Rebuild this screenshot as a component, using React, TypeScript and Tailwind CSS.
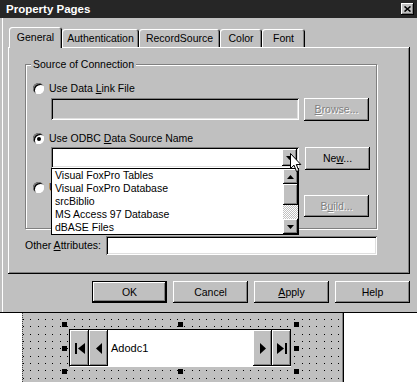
import type { ReactNode } from "react";

const raised = "bg-[#c0c0c0] shadow-[inset_-1px_-1px_#000,inset_1px_1px_#fff,inset_-2px_-2px_#808080]";
const sunken = "shadow-[inset_1px_1px_#808080,inset_-1px_-1px_#fff,inset_2px_2px_#000,inset_-2px_-2px_#dfdfdf]";
const grayed = "text-[#808080] [text-shadow:1px_1px_0_#fff]";

function Radio({ checked = false }: { checked?: boolean }) {
  return (
    <span className="flex h-[11px] w-[11px] shrink-0 items-center justify-center rounded-full bg-white shadow-[inset_1px_1px_#808080,inset_-1px_-1px_#fff,inset_2px_2px_#000]">
      {checked && <span className="h-[4px] w-[4px] rounded-full bg-black" />}
    </span>
  );
}

function RadioRow({ children, checked, className = "" }: { children: ReactNode; checked?: boolean; className?: string }) {
  return (
    <div className={`relative flex h-[13px] items-center gap-[5px] pl-[7px] ${className}`}>
      <Radio checked={checked} />
      <span className="whitespace-nowrap">{children}</span>
    </div>
  );
}

function Button({
  children,
  className = "",
  disabled = false,
  isDefault = false,
}: {
  children: ReactNode;
  className?: string;
  disabled?: boolean;
  isDefault?: boolean;
}) {
  return (
    <div
      className={`flex shrink-0 items-center justify-center ${raised} ${isDefault ? "border border-black" : ""} ${
        disabled ? grayed : ""
      } ${className}`}
    >
      {children}
    </div>
  );
}

function Tri({ dir }: { dir: "up" | "down" }) {
  return (
    <svg width="7" height="4" viewBox="0 0 7 4">
      <polygon points={dir === "down" ? "0,0 7,0 3.5,4" : "0,4 7,4 3.5,0"} fill="#000" />
    </svg>
  );
}

function NavGlyph({ kind }: { kind: "first" | "prev" | "next" | "last" }) {
  if (kind === "first")
    return (
      <svg width="10" height="11" viewBox="0 0 10 11">
        <rect x="0" y="0" width="2" height="11" fill="#000" />
        <polygon points="10,0 10,11 3,5.5" fill="#000" />
      </svg>
    );
  if (kind === "prev")
    return (
      <svg width="6" height="11" viewBox="0 0 6 11">
        <polygon points="6,0 6,11 0,5.5" fill="#000" />
      </svg>
    );
  if (kind === "next")
    return (
      <svg width="6" height="11" viewBox="0 0 6 11">
        <polygon points="0,0 0,11 6,5.5" fill="#000" />
      </svg>
    );
  return (
    <svg width="10" height="11" viewBox="0 0 10 11">
      <polygon points="0,0 0,11 7,5.5" fill="#000" />
      <rect x="8" y="0" width="2" height="11" fill="#000" />
    </svg>
  );
}

const sources = [
  "Visual FoxPro Tables",
  "Visual FoxPro Database",
  "srcBiblio",
  "MS Access 97 Database",
  "dBASE Files",
];

export default function App() {
  return (
    <div className="h-[382px] w-[417px] overflow-hidden bg-white font-['Liberation_Sans',Arial,sans-serif] text-[10.5px] leading-[13px] text-black">
      {/* dialog window */}
      <div className="h-[313px] border-b border-black bg-[#c0c0c0] shadow-[inset_2px_0_#c0c0c0,inset_3px_0_#fff]">
        {/* title bar */}
        <div className="flex h-[18px] items-center justify-between bg-[#262626] pl-[6px] pr-[3px]">
          <span className="text-[11.5px] font-bold text-white">Property Pages</span>
          <div className={`flex h-[12px] w-[13px] items-center justify-center ${raised}`}>
            <svg width="7" height="6" viewBox="0 0 7 6">
              <path d="M0.5 0.5 L6.5 5.5 M6.5 0.5 L0.5 5.5" stroke="#000" strokeWidth="1.6" />
            </svg>
          </div>
        </div>

        {/* tabs */}
        <div className="ml-[9px] mt-[9px] flex h-[20px] items-end">
          <div className="relative z-10 -mb-px flex h-[21px] w-[53px] items-center justify-center rounded-t-[3px] bg-[#c0c0c0] pb-[1px] shadow-[inset_1px_1px_#fff,inset_-1px_0_#000,inset_-2px_0_#808080]">
            General
          </div>
          <div className="flex h-[18px] w-[77px] items-center justify-center rounded-t-[3px] shadow-[inset_1px_1px_#fff,inset_-1px_0_#000,inset_-2px_0_#808080]">
            Authentication
          </div>
          <div className="flex h-[18px] w-[81px] items-center justify-center rounded-t-[3px] shadow-[inset_1px_1px_#fff,inset_-1px_0_#000,inset_-2px_0_#808080]">
            RecordSource
          </div>
          <div className="flex h-[18px] w-[42px] items-center justify-center rounded-t-[3px] shadow-[inset_1px_1px_#fff,inset_-1px_0_#000,inset_-2px_0_#808080]">
            Color
          </div>
          <div className="flex h-[18px] w-[43px] items-center justify-center rounded-t-[3px] shadow-[inset_1px_1px_#fff,inset_-1px_0_#000,inset_-2px_0_#808080]">
            Font
          </div>
        </div>

        {/* tab page */}
        <div className="ml-[8px] h-[227px] w-[402px] pt-[17px] shadow-[inset_-1px_-1px_#000,inset_1px_1px_#fff,inset_-2px_-2px_#808080]">
          {/* group box */}
          <div className="relative ml-[17px] w-[352px] border border-[#808080] pb-[11px] pt-[17px] shadow-[inset_1px_1px_#fff,1px_1px_#fff]">
            <span className="absolute -top-[7px] left-[5px] bg-[#c0c0c0] px-[2px]">Source of Connection</span>

            <RadioRow>
              Use Data <u>L</u>ink File
            </RadioRow>
            <div className="mt-[3px] flex h-[23px] items-start">
              <div className={`ml-[25px] h-[22px] w-[248px] bg-[#c0c0c0] ${sunken}`} />
              <Button disabled className="ml-[5px] h-[23px] w-[65px]">
                <span>
                  <u>B</u>rowse...
                </span>
              </Button>
            </div>

            <RadioRow checked className="mt-[11px]">
              Use ODBC <u>D</u>ata Source Name
            </RadioRow>
            <div className="mt-[2px] flex h-[23px] items-start">
              <div className={`relative ml-[25px] flex h-[21px] w-[248px] justify-end bg-white p-[2px] ${sunken}`}>
                <div className={`flex h-[17px] w-[15px] items-center justify-center ${raised}`}>
                  <Tri dir="down" />
                </div>

                {/* open drop-down list */}
                <div className="absolute left-0 top-[21px] z-10 flex h-[67px] w-[248px] border border-black bg-white">
                  <ul className="flex-1 pl-[3px]">
                    {sources.map((s) => (
                      <li key={s} className="h-[13px] whitespace-nowrap">
                        {s}
                      </li>
                    ))}
                  </ul>
                  <div className="flex w-[15px] flex-col">
                    <div className={`flex h-[15px] items-center justify-center ${raised}`}>
                      <Tri dir="up" />
                    </div>
                    <div className={`h-[21px] ${raised}`} />
                    <div className="h-[14px] [background-image:repeating-conic-gradient(#c0c0c0_0_25%,#fff_0_50%)] [background-size:2px_2px]" />
                    <div className={`flex h-[15px] items-center justify-center ${raised}`}>
                      <Tri dir="down" />
                    </div>
                  </div>
                </div>

                {/* mouse pointer */}
                <svg className="absolute left-[239px] top-[6px] z-20" width="12" height="20" viewBox="0 0 12 20">
                  <polygon
                    points="0.5,0.5 0.5,15.5 4,12.2 6.5,18.5 8.8,17.5 6.3,11.5 10.8,11.5"
                    fill="#fff"
                    stroke="#000"
                    strokeWidth="1"
                    strokeLinejoin="miter"
                  />
                </svg>
              </div>
              <Button className="ml-[6px] h-[23px] w-[65px]">
                <span>
                  Ne<u>w</u>...
                </span>
              </Button>
            </div>

            {/* third option, hidden behind the open list: only its first sliver shows */}
            <div className="relative mt-[11px] flex h-[13px] items-center gap-[5px] pl-[7px]">
              <Radio />
              <span className="w-[2px] overflow-hidden whitespace-nowrap">U</span>
            </div>
            <div className="mt-[1px] flex h-[22px] items-start">
              <div className={`ml-[25px] h-[22px] w-[248px] bg-white ${sunken}`} />
              <Button disabled className="ml-[5px] h-[22px] w-[65px]">
                <span>
                  B<u>u</u>ild...
                </span>
              </Button>
            </div>
          </div>

          {/* other attributes */}
          <div className="ml-[17px] mt-[7px] flex h-[19px] items-center">
            <span className="w-[81px] whitespace-nowrap">
              Other <u>A</u>ttributes:
            </span>
            <div className={`h-[19px] w-[271px] bg-white ${sunken}`} />
          </div>
        </div>

        {/* dialog buttons */}
        <div className="mt-[7px] flex justify-end gap-[6px] pr-[7px]">
          <Button isDefault className="h-[22px] w-[75px]">
            OK
          </Button>
          <Button className="h-[22px] w-[75px]">Cancel</Button>
          <Button className="h-[22px] w-[75px]">
            <span>
              <u>A</u>pply
            </span>
          </Button>
          <Button className="h-[22px] w-[75px]">Help</Button>
        </div>
      </div>

      {/* form designer with ADO data control */}
      <div className="relative ml-[22px] h-[69px] w-[322px] border-l border-dotted border-[#404040] bg-[#c0c0c0] pl-[46px] pt-[16px] shadow-[inset_-1px_0_#000,inset_-2px_0_#808080]">
        <svg className="absolute bottom-0 left-0 top-0 right-[2px]" width="319" height="69">
          <defs>
            <pattern id="dots" x="0" y="6" width="22" height="22" patternUnits="userSpaceOnUse">
              <rect x="0" y="0" width="1" height="1" fill="#000" />
              <rect x="7" y="0" width="1" height="1" fill="#000" />
              <rect x="15" y="0" width="1" height="1" fill="#000" />
              <rect x="0" y="7" width="1" height="1" fill="#000" />
              <rect x="7" y="7" width="1" height="1" fill="#000" />
              <rect x="15" y="7" width="1" height="1" fill="#000" />
              <rect x="0" y="15" width="1" height="1" fill="#000" />
              <rect x="7" y="15" width="1" height="1" fill="#000" />
              <rect x="15" y="15" width="1" height="1" fill="#000" />
            </pattern>
          </defs>
          <rect width="100%" height="100%" fill="url(#dots)" />
        </svg>

        <div className="relative flex h-[38px] w-[222px] border-l border-t border-black border-b border-b-white bg-white">
          <div className={`flex h-full w-[19px] items-center justify-center ${raised}`}>
            <NavGlyph kind="first" />
          </div>
          <div className={`flex h-full w-[19px] items-center justify-center ${raised}`}>
            <NavGlyph kind="prev" />
          </div>
          <div className="flex flex-1 items-center pl-[3px] text-[11px]">Adodc1</div>
          <div className={`flex h-full w-[19px] items-center justify-center ${raised}`}>
            <NavGlyph kind="next" />
          </div>
          <div className={`flex h-full w-[19px] items-center justify-center ${raised}`}>
            <NavGlyph kind="last" />
          </div>

          {/* selection handles */}
          <span className="absolute -left-[8px] -top-[8px] h-[5px] w-[5px] bg-black" />
          <span className="absolute left-[108px] -top-[8px] h-[5px] w-[5px] bg-black" />
          <span className="absolute left-[224px] -top-[8px] h-[5px] w-[5px] bg-black" />
          <span className="absolute -left-[8px] top-[16px] h-[5px] w-[5px] bg-black" />
          <span className="absolute left-[224px] top-[16px] h-[5px] w-[5px] bg-black" />
          <span className="absolute -left-[8px] top-[39px] h-[5px] w-[5px] bg-black" />
          <span className="absolute left-[108px] top-[39px] h-[5px] w-[5px] bg-black" />
          <span className="absolute left-[224px] top-[39px] h-[5px] w-[5px] bg-black" />
        </div>
      </div>
    </div>
  );
}
